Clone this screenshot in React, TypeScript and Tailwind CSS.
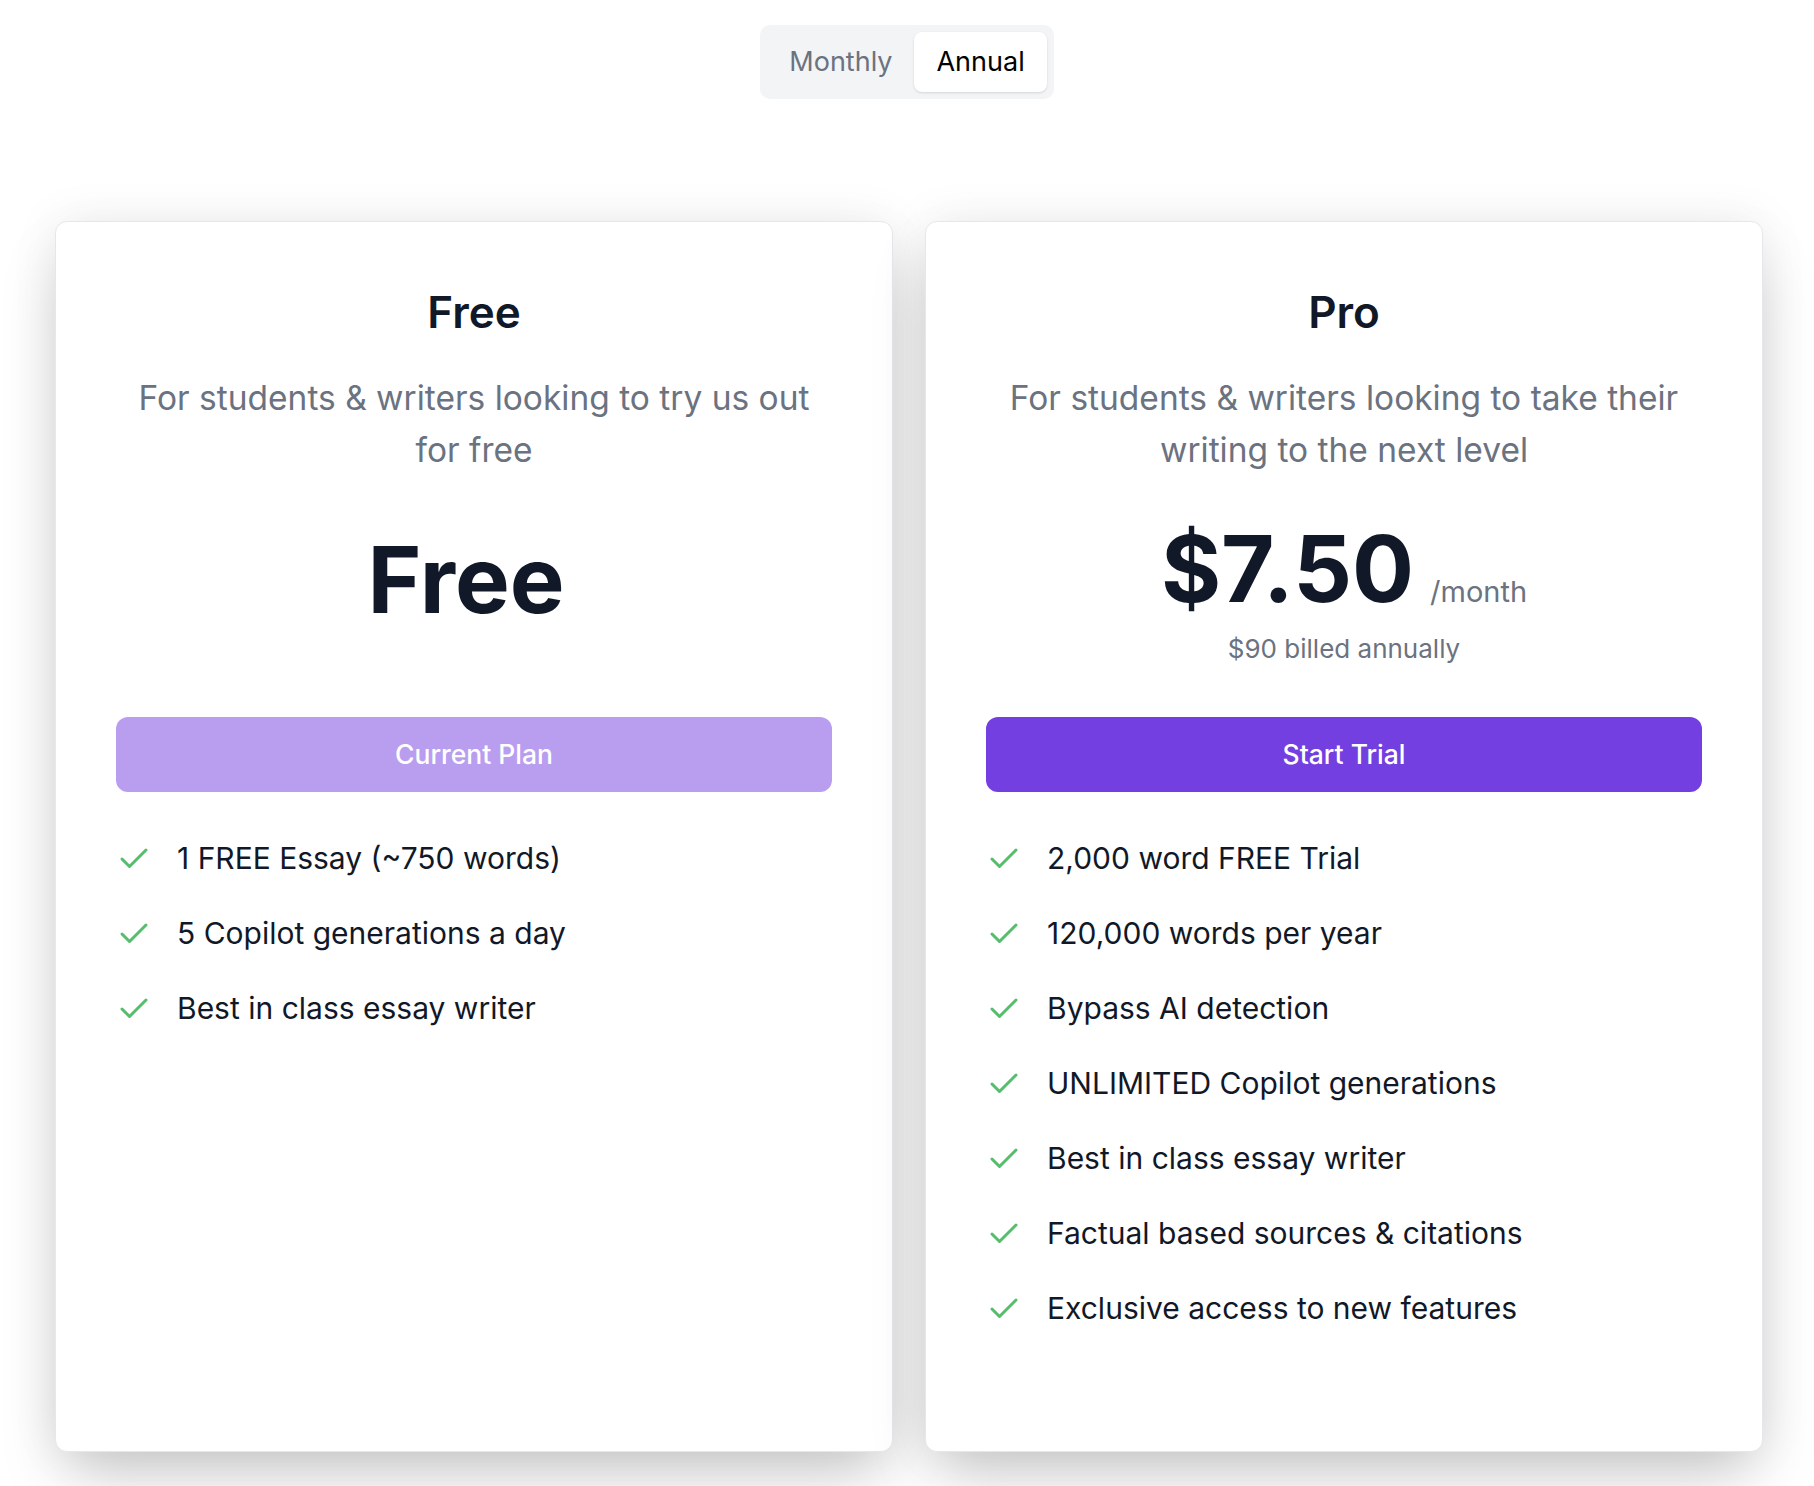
import { Check } from 'lucide-react';

type Plan = {
  name: string;
  blurb: string;
  price: string;
  per?: string;
  billed?: string;
  cta: string;
  current: boolean;
  features: string[];
};

const plans: Plan[] = [
  {
    name: 'Free',
    blurb: 'For students & writers looking to try us out for free',
    price: 'Free',
    cta: 'Current Plan',
    current: true,
    features: ['1 FREE Essay (~750 words)', '5 Copilot generations a day', 'Best in class essay writer'],
  },
  {
    name: 'Pro',
    blurb: 'For students & writers looking to take their writing to the next level',
    price: '$7.50',
    per: '/month',
    billed: '$90 billed annually',
    cta: 'Start Trial',
    current: false,
    features: [
      '2,000 word FREE Trial',
      '120,000 words per year',
      'Bypass AI detection',
      'UNLIMITED Copilot generations',
      'Best in class essay writer',
      'Factual based sources & citations',
      'Exclusive access to new features',
    ],
  },
];

function PlanCard({ plan }: { plan: Plan }) {
  return (
    <div className="flex flex-col bg-white border border-[#e5e7eb] rounded-xl px-[60px] pt-16 pb-[120px] shadow-[0_0_50px_rgba(0,0,0,0.07),0_30px_60px_-12px_rgba(0,0,0,0.22)]">
      <h2 className="text-center text-[44px] leading-[53px] font-semibold text-[#111827]">{plan.name}</h2>
      <p className="mt-[33px] text-center text-[33.5px] leading-[52px] text-[#6b7280]">{plan.blurb}</p>

      <div className={`h-[241px] flex flex-col items-center ${plan.billed ? 'pt-[47px]' : 'pt-[58px]'}`}>
        <div className="flex items-baseline">
          <span className="text-[92px] leading-none font-bold text-[#111827]">{plan.price}</span>
          {/* suffix slot keeps its margin even when there is no unit */}
          <span className="ml-4 text-[29px] text-[#6b7280]">{plan.per}</span>
        </div>
        {plan.billed && <div className="mt-4 text-[26px] leading-9 text-[#6b7280]">{plan.billed}</div>}
      </div>

      <button
        className={`h-[75px] w-full rounded-xl text-[26.5px] font-medium text-white ${
          plan.current ? 'bg-[#b99ef0]' : 'bg-[#743fe0]'
        }`}
      >
        {plan.cta}
      </button>

      <ul className="mt-11 flex flex-col gap-[30px]">
        {plan.features.map(f => (
          <li key={f} className="flex items-center gap-[25px]">
            <Check className="w-9 h-9 shrink-0 text-[#55bd6b]" strokeWidth={2} />
            <span className="text-[30px] leading-[45px] text-[#111827]">{f}</span>
          </li>
        ))}
      </ul>
    </div>
  );
}

export default function App() {
  return (
    <div className="min-h-screen bg-white font-['Inter',sans-serif] pt-[25px] pb-20">
      <div className="flex justify-center">
        <div className="flex p-[7px] rounded-[10px] bg-[#f3f4f6]">
          <button className="h-[60px] px-[22px] rounded-lg text-[27px] text-[#6b7280]">Monthly</button>
          <button className="h-[60px] px-[22px] rounded-lg text-[27px] text-black bg-white shadow-sm">Annual</button>
        </div>
      </div>

      <div className="mt-[122px] grid grid-cols-2 gap-8 pl-[55px] pr-[51px]">
        {plans.map(p => (
          <PlanCard key={p.name} plan={p} />
        ))}
      </div>
    </div>
  );
}
